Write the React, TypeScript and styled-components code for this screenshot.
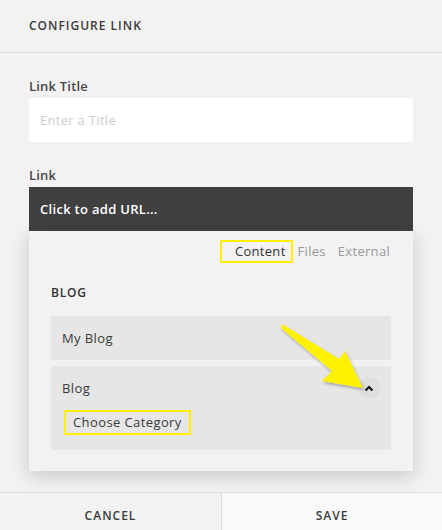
import styled, { createGlobalStyle } from "styled-components";

const GlobalStyle = createGlobalStyle`
    html, body {
        margin: 0;
        padding: 0;
        background: #f2f2f2;
        font-family: "Open Sans", "Lato", sans-serif;
        color: #333;
    }
`;

const Page = styled.div`
    position: relative;
    width: 442px;
    height: 530px;
    display: flex;
    flex-direction: column;
    background: #f2f2f2;
    overflow: hidden;
`;

const Header = styled.div`
    height: 53px;
    box-sizing: border-box;
    border-bottom: 1px solid #dddddd;
    display: flex;
    align-items: center;
    padding: 0 29px 1px;
    font-size: 12px;
    font-weight: 600;
    letter-spacing: 1px;
    color: #3a3a3a;
`;

const Body = styled.div`
    padding: 0 29px;
    display: flex;
    flex-direction: column;
`;

const Label = styled.div<{ $top: number }>`
    margin-top: ${({ $top }) => $top}px;
    margin-bottom: 4px;
    font-size: 13px;
    line-height: 16px;
    font-weight: 600;
    letter-spacing: 0.2px;
    color: #474747;
`;

const TextInput = styled.div`
    height: 44px;
    background: #ffffff;
    display: flex;
    align-items: center;
    padding: 0 11px;
    font-size: 13px;
    letter-spacing: 0.3px;
    color: #cccccc;
`;

const UrlBar = styled.div`
    height: 44px;
    background: #404040;
    display: flex;
    align-items: center;
    padding: 0 11px;
    font-size: 13px;
    font-weight: 600;
    letter-spacing: 0.3px;
    color: #ffffff;
`;

const Panel = styled.div`
    height: 240px;
    box-sizing: border-box;
    background: #f2f2f2;
    box-shadow: 0 5px 18px rgba(0, 0, 0, 0.18);
    padding: 9px 22px 22px;
    display: flex;
    flex-direction: column;
`;

const Tabs = styled.div`
    display: flex;
    justify-content: flex-end;
    align-items: center;
    padding-right: 1px;
`;

const Tab = styled.span<{ $active?: boolean; $mark?: boolean; $gap?: number }>`
    margin-left: ${({ $gap }) => $gap ?? 0}px;
    font-size: 13px;
    line-height: 19px;
    letter-spacing: 0.3px;
    color: ${({ $active }) => ($active ? "#333" : "#9a9a9a")};
    ${({ $mark }) =>
        $mark &&
        `
        border: 2px solid #ffef00;
        padding: 0 5px 0 13px;
    `}
`;

const SectionTitle = styled.div`
    margin-top: 22px;
    font-size: 12px;
    line-height: 16px;
    font-weight: 600;
    letter-spacing: 0.8px;
    color: #333;
`;

const List = styled.div`
    margin-top: 15px;
    display: flex;
    flex-direction: column;
    gap: 6px;
`;

const Row = styled.div`
    background: #e6e6e6;
`;

const RowHead = styled.div`
    height: 44px;
    display: flex;
    align-items: center;
    justify-content: space-between;
    padding: 0 11px;
    font-size: 13px;
    letter-spacing: 0.4px;
    color: #3a3a3a;
`;

const Toggle = styled.div`
    width: 22px;
    height: 22px;
    border-radius: 50%;
    background: #dedede;
    display: flex;
    align-items: center;
    justify-content: center;
`;

const RowBody = styled.div`
    padding: 0 13px 15px;
    display: flex;
`;

const Category = styled.span`
    border: 2px solid #ffef00;
    padding: 2px 7px;
    font-size: 13px;
    line-height: 17px;
    letter-spacing: 0.4px;
    color: #3a3a3a;
`;

const Footer = styled.div`
    margin-top: auto;
    height: 37px;
    border-top: 1px solid #dddddd;
    display: grid;
    grid-template-columns: 221px 1fr;
`;

const FooterButton = styled.div<{ $primary?: boolean }>`
    display: flex;
    align-items: center;
    justify-content: center;
    padding-top: 7px;
    font-size: 12px;
    font-weight: 600;
    letter-spacing: 1px;
    color: #3a3a3a;
    background: ${({ $primary }) => ($primary ? "#f9f9f9" : "#f2f2f2")};
    border-left: ${({ $primary }) => ($primary ? "1px solid #dddddd" : "none")};
`;

const Pointer = styled.svg`
    position: absolute;
    left: 0;
    top: 0;
    pointer-events: none;
`;

export default function App() {
    return (
        <>
            <GlobalStyle />
            <Page>
                <Header>CONFIGURE LINK</Header>
                <Body>
                    <Label $top={25}>Link Title</Label>
                    <TextInput>Enter a Title</TextInput>
                    <Label $top={25}>Link</Label>
                    <UrlBar>Click to add URL...</UrlBar>
                    <Panel>
                        <Tabs>
                            <Tab $active $mark>
                                Content
                            </Tab>
                            <Tab $gap={5}>Files</Tab>
                            <Tab $gap={12}>External</Tab>
                        </Tabs>
                        <SectionTitle>BLOG</SectionTitle>
                        <List>
                            <Row>
                                <RowHead>My Blog</RowHead>
                            </Row>
                            <Row>
                                <RowHead>
                                    Blog
                                    <Toggle>
                                        <svg width="10" height="7" viewBox="0 0 10 7">
                                            <path d="M1.5 5.5 L5 2 L8.5 5.5" fill="none" stroke="#111" strokeWidth="2" />
                                        </svg>
                                    </Toggle>
                                </RowHead>
                                <RowBody>
                                    <Category>Choose Category</Category>
                                </RowBody>
                            </Row>
                        </List>
                    </Panel>
                </Body>
                <Footer>
                    <FooterButton>CANCEL</FooterButton>
                    <FooterButton $primary>SAVE</FooterButton>
                </Footer>
                <Pointer width="442" height="530" viewBox="0 0 442 530">
                    <defs>
                        <filter id="arrowShadow" x="-20%" y="-20%" width="140%" height="140%">
                            <feDropShadow dx="1" dy="2" stdDeviation="1.5" floodColor="#000" floodOpacity="0.3" />
                        </filter>
                    </defs>
                    <polygon
                        points="282,324 339,359 345,351 363,388 322,381 332,371 281,328"
                        fill="#fff200"
                        filter="url(#arrowShadow)"
                    />
                </Pointer>
            </Page>
        </>
    );
}
